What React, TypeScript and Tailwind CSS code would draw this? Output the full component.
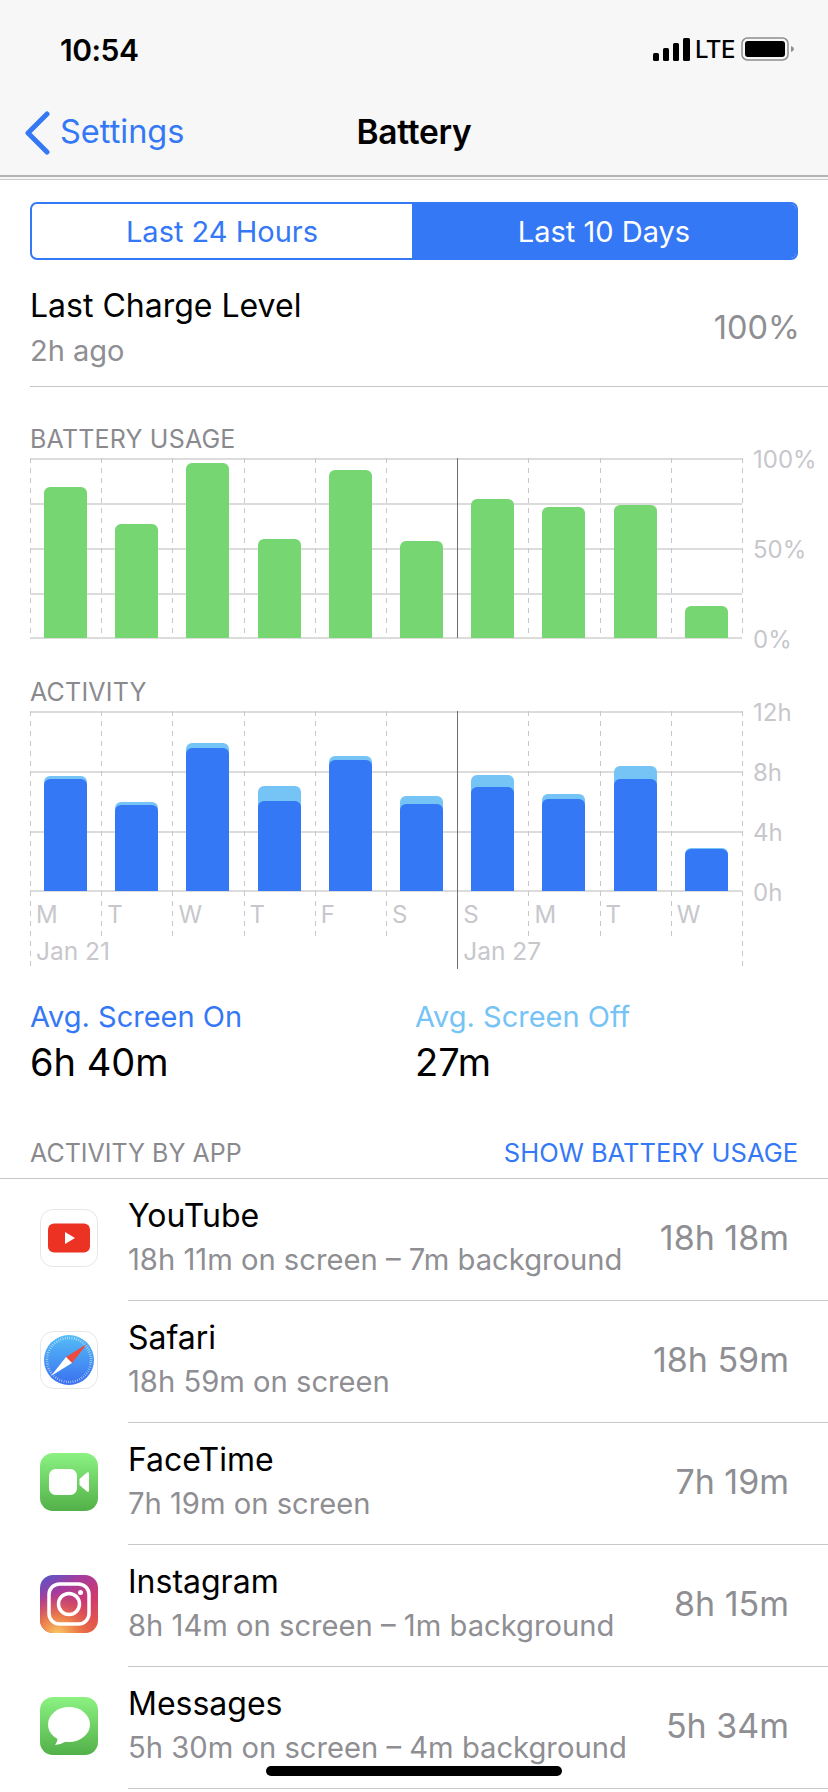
import React from 'react';

const batteryBars = [151, 114, 175, 99, 168, 97, 139, 131, 133, 32];

const activityBars = [
  { total: 115, screen: 112 },
  { total: 89, screen: 86 },
  { total: 148, screen: 143 },
  { total: 105, screen: 90 },
  { total: 135, screen: 131 },
  { total: 95, screen: 87 },
  { total: 116, screen: 104 },
  { total: 97, screen: 92 },
  { total: 125, screen: 112 },
  { total: 43, screen: 42 },
];

const days = ['M', 'T', 'W', 'T', 'F', 'S', 'S', 'M', 'T', 'W'];

const apps = [
  { name: 'YouTube', detail: '18h 11m on screen – 7m background', time: '18h 18m', icon: <YouTubeIcon /> },
  { name: 'Safari', detail: '18h 59m on screen', time: '18h 59m', icon: <SafariIcon /> },
  { name: 'FaceTime', detail: '7h 19m on screen', time: '7h 19m', icon: <FaceTimeIcon /> },
  { name: 'Instagram', detail: '8h 14m on screen – 1m background', time: '8h 15m', icon: <InstagramIcon /> },
  { name: 'Messages', detail: '5h 30m on screen – 4m background', time: '5h 34m', icon: <MessagesIcon /> },
];

function YouTubeIcon() {
  return (
    <svg width="58" height="58" viewBox="0 0 58 58">
      <rect x="0.5" y="0.5" width="57" height="57" rx="12.5" fill="#fff" stroke="#e6e6e6" />
      <rect x="8" y="14.500" width="42" height="29" rx="6" fill="#ec3323" />
      <path d="M25 23 L35 29 L25 35 Z" fill="#fff" />
    </svg>
  );
}

function SafariIcon() {
  return (
    <svg width="58" height="58" viewBox="0 0 58 58">
      <defs>
        <linearGradient id="safari" x1="0" y1="0" x2="0" y2="1">
          <stop offset="0" stopColor="#55bdf6" />
          <stop offset="1" stopColor="#3a6ff0" />
        </linearGradient>
      </defs>
      <rect x="0.5" y="0.5" width="57" height="57" rx="12.5" fill="#fff" stroke="#e6e6e6" />
      <circle cx="29" cy="29" r="25" fill="url(#safari)" />
      <circle cx="29" cy="29" r="22" fill="none" stroke="#fff" strokeOpacity="0.75" strokeWidth="2.500" strokeDasharray="0.6 1.7" />
      <path d="M47 13 L32 32 L26 26 Z" fill="#ef4b3c" />
      <path d="M11 45 L26 26 L32 32 Z" fill="#fff" />
    </svg>
  );
}

function FaceTimeIcon() {
  return (
    <svg width="58" height="58" viewBox="0 0 58 58">
      <defs>
        <linearGradient id="facetime" x1="0" y1="0" x2="0" y2="1">
          <stop offset="0" stopColor="#8bf282" />
          <stop offset="1" stopColor="#52b048" />
        </linearGradient>
      </defs>
      <rect width="58" height="58" rx="13" fill="url(#facetime)" />
      <rect x="9" y="16" width="28" height="26" rx="6.500" fill="#fff" />
      <path d="M39.500 26 L47 19.500 Q49 18.500 49 20.500 V37.500 Q49 39.500 47 38.500 L39.500 32 Z" fill="#fff" />
    </svg>
  );
}

function InstagramIcon() {
  return (
    <svg width="58" height="58" viewBox="0 0 58 58">
      <defs>
        <linearGradient id="igBase" x1="0.1" y1="0" x2="0.7" y2="1">
          <stop offset="0" stopColor="#5a55c8" />
          <stop offset="0.3" stopColor="#a63b9c" />
          <stop offset="0.65" stopColor="#cf3a6e" />
          <stop offset="1" stopColor="#e4574a" />
        </linearGradient>
        <radialGradient id="igGlow" cx="0.3" cy="1.050" r="0.75">
          <stop offset="0" stopColor="#fbd26a" />
          <stop offset="0.45" stopColor="#f08a45" stopOpacity="0.85" />
          <stop offset="1" stopColor="#e4574a" stopOpacity="0" />
        </radialGradient>
      </defs>
      <rect width="58" height="58" rx="13" fill="url(#igBase)" />
      <rect width="58" height="58" rx="13" fill="url(#igGlow)" />
      <rect x="9" y="9" width="40" height="40" rx="10.500" fill="none" stroke="#fff" strokeWidth="3.500" />
      <circle cx="29" cy="29" r="10.500" fill="none" stroke="#fff" strokeWidth="3.500" />
      <circle cx="40.500" cy="17.500" r="2.500" fill="#fff" />
    </svg>
  );
}

function MessagesIcon() {
  return (
    <svg width="58" height="58" viewBox="0 0 58 58">
      <defs>
        <linearGradient id="messages" x1="0" y1="0" x2="0" y2="1">
          <stop offset="0" stopColor="#8bf282" />
          <stop offset="1" stopColor="#52b048" />
        </linearGradient>
      </defs>
      <rect width="58" height="58" rx="13" fill="url(#messages)" />
      <ellipse cx="29" cy="27.500" rx="21" ry="17.500" fill="#fff" />
      <path d="M18 38 Q18 44 15 48 Q22 47 27 44 Z" fill="#fff" />
    </svg>
  );
}

function ChartLines({ height, lines, inner }: { height: number; lines: number[]; inner: number }) {
  return (
    <svg className="absolute left-0 top-0" width="713" height={height + 2}>
      {lines.map((y) => (
        <line key={y} x1="0" x2="712" y1={y + 1} y2={y + 1} stroke="#dcdcdc" strokeWidth="2" />
      ))}
      {Array.from({ length: 11 }).map((_, i) =>
        i === 6 ? (
          <line key={i} x1="427.500" x2="427.500" y1="0" y2={height} stroke="#6e6e6e" strokeWidth="1" />
        ) : (
          <line
            key={i}
            x1={Math.round(i * 71.2) + 0.5}
            x2={Math.round(i * 71.2) + 0.5}
            y1="0"
            y2={i === 0 || i === 10 ? height : inner}
            stroke="#c8c8c8"
            strokeWidth="1"
            strokeDasharray="5 5"
          />
        ),
      )}
    </svg>
  );
}

function AxisLabels({ labels }: { labels: string[] }) {
  return (
    <div className="ml-[11px] mt-[2px] flex h-[180px] flex-col justify-between text-[24px] text-[#c7c7cc]">
      {labels.map((label, i) => (
        <div key={i} className="flex h-0 items-center">
          {label}
        </div>
      ))}
    </div>
  );
}

function SectionLabel({ children }: { children: React.ReactNode }) {
  return <div className="text-[25px] leading-[26px] tracking-[0.2px] text-[#8a8a8e]">{children}</div>;
}

function BatteryChart() {
  return (
    <div className="flex items-start">
      <div className="relative h-[180px] w-[712px]">
        <ChartLines height={180} inner={180} lines={[0, 45, 90, 135, 179]} />
        <div className="relative grid h-[180px] grid-cols-10 items-end">
          {batteryBars.map((h, i) => (
            <div key={i} className="flex justify-center">
              <div className="w-[43px] rounded-t-[6px] bg-[#76d672]" style={{ height: h }} />
            </div>
          ))}
        </div>
      </div>
      <AxisLabels labels={['100%', '', '50%', '', '0%']} />
    </div>
  );
}

function ActivityChart() {
  return (
    <div className="flex items-start">
      <div className="relative h-[258px] w-[712px]">
        <ChartLines height={258} inner={225} lines={[0, 60, 120, 179]} />
        <div className="relative grid h-[180px] grid-cols-10 items-end">
          {activityBars.map((bar, i) => (
            <div key={i} className="flex justify-center">
              <div className="relative w-[43px] rounded-t-[6px] bg-[#76c3f6]" style={{ height: bar.total }}>
                <div
                  className="absolute bottom-0 left-0 w-full rounded-t-[6px] bg-[#3478f6]"
                  style={{ height: bar.screen }}
                />
              </div>
            </div>
          ))}
        </div>
        <div className="relative grid grid-cols-10 pt-[11px] text-[24px] leading-[26px] text-[#c7c7cc]">
          {days.map((day, i) => (
            <div key={i} className="pl-[6px]">
              {day}
            </div>
          ))}
        </div>
        <div className="relative mt-[10px] grid grid-cols-10 text-[24.500px] leading-[26px] text-[#c7c7cc]">
          <div className="col-span-6 pl-[6px]">Jan 21</div>
          <div className="col-span-4 pl-[6px]">Jan 27</div>
        </div>
      </div>
      <AxisLabels labels={['12h', '8h', '4h', '0h']} />
    </div>
  );
}

export default function App() {
  return (
    <div className="relative h-[1792px] w-[828px] overflow-hidden bg-white font-['Inter',sans-serif] text-black">
      <header className="h-[180px] border-b border-[#c9c9c9] bg-[#f7f7f7]">
        <div className="h-[177px] border-b-2 border-[#b4b4b4]">
          <div className="flex h-[100px] items-start justify-between pl-[60px] pr-[33px]">
            <div className="pt-[32px] text-[30px] font-semibold leading-[36px] tracking-[-0.5px]">10:54</div>
            <div className="flex items-start pt-[37px]">
              <svg width="38" height="24" viewBox="0 0 38 24" className="mt-[1px]">
                <rect x="0" y="15" width="6" height="8" rx="1.500" />
                <rect x="10" y="10" width="6" height="13" rx="1.500" />
                <rect x="20" y="5" width="6" height="18" rx="1.500" />
                <rect x="30" y="0" width="7" height="23" rx="1.500" />
              </svg>
              <div className="ml-[4px] mt-[1px] text-[24px] font-medium leading-[24px] tracking-[-0.5px]">LTE</div>
              <svg width="54" height="24" viewBox="0 0 54 24" className="ml-[6px]">
                <rect x="1" y="1" width="46" height="22" rx="5.500" fill="none" stroke="#8e8e8e" strokeWidth="1.500" />
                <rect x="4" y="4" width="40" height="16" rx="3" />
                <path d="M50 9 Q53 10 53 12 Q53 14 50 15 Z" fill="#8e8e8e" />
              </svg>
            </div>
          </div>
          <div className="relative flex h-[64px] items-center justify-center">
            <div className="absolute left-[24px] top-[10px] flex items-center">
              <svg width="28" height="44" viewBox="0 0 28 44" fill="none">
                <path d="M23 3 L4 22 L23 41" stroke="#3478f6" strokeWidth="5" strokeLinecap="round" strokeLinejoin="round" />
              </svg>
              <span className="ml-[8px] -mt-[2px] text-[32.500px] text-[#3478f6]">Settings</span>
            </div>
            <div className="text-[33.500px] font-semibold tracking-[-0.3px]">Battery</div>
          </div>
        </div>
      </header>

      <div className="mx-[30px] mt-[22px] flex h-[58px] w-[768px] overflow-hidden rounded-[7px] border-2 border-[#3478f6] text-[29px]">
        <div className="flex w-[380px] items-center justify-center pt-[1px] text-[#3478f6]">Last 24 Hours</div>
        <div className="flex flex-1 items-center justify-center bg-[#3478f6] pt-[1px] text-white">Last 10 Days</div>
      </div>

      <div className="ml-[30px] mt-[17px] flex h-[110px] items-center justify-between border-b border-[#c8c7cc] pb-[10px] pr-[28px]">
        <div>
          <div className="text-[32px] leading-[38px]">Last Charge Level</div>
          <div className="mt-[10px] text-[29px] leading-[32px] text-[#8e8e93]">2h ago</div>
        </div>
        <div className="pt-[4px] text-[32.500px] text-[#8e8e93]">100%</div>
      </div>

      <div className="ml-[30px] mt-[39px]">
        <SectionLabel>BATTERY USAGE</SectionLabel>
        <div className="mt-[6px]">
          <BatteryChart />
        </div>
        <div className="mt-[39px]">
          <SectionLabel>ACTIVITY</SectionLabel>
        </div>
        <div className="mt-[6px]">
          <ActivityChart />
        </div>
      </div>

      <div className="ml-[30px] mt-[31px] flex">
        <div className="w-[385px]">
          <div className="text-[29px] leading-[34px] text-[#3478f6]">Avg. Screen On</div>
          <div className="mt-[6px] text-[38px] leading-[44px]">6h 40m</div>
        </div>
        <div>
          <div className="text-[29px] leading-[34px] text-[#76c3f6]">Avg. Screen Off</div>
          <div className="mt-[6px] text-[38px] leading-[44px]">27m</div>
        </div>
      </div>

      <div className="mt-[55px] flex h-[40px] items-start justify-between border-b border-[#c8c7cc] pl-[30px] pr-[30px] leading-[28px]">
        <div className="text-[25px] text-[#8a8a8e]">ACTIVITY BY APP</div>
        <div className="text-[25.500px] text-[#3478f6]">SHOW BATTERY USAGE</div>
      </div>

      {apps.map((app) => (
        <div key={app.name} className="flex h-[122px] pl-[40px]">
          <div className="flex h-[118px] w-[88px] flex-none items-center">{app.icon}</div>
          <div className="flex flex-1 items-center justify-between border-b border-[#c8c7cc] pr-[39px]">
            <div className="pb-[6px]">
              <div className="text-[32px] leading-[38px]">{app.name}</div>
              <div className="mt-[9px] text-[29.200px] leading-[32px] text-[#8e8e93]">{app.detail}</div>
            </div>
            <div className="pb-[5px] text-[34px] text-[#8e8e93]">{app.time}</div>
          </div>
        </div>
      ))}

      <div className="absolute bottom-[16px] left-[266px] h-[10px] w-[296px] rounded-full bg-black" />
    </div>
  );
}
